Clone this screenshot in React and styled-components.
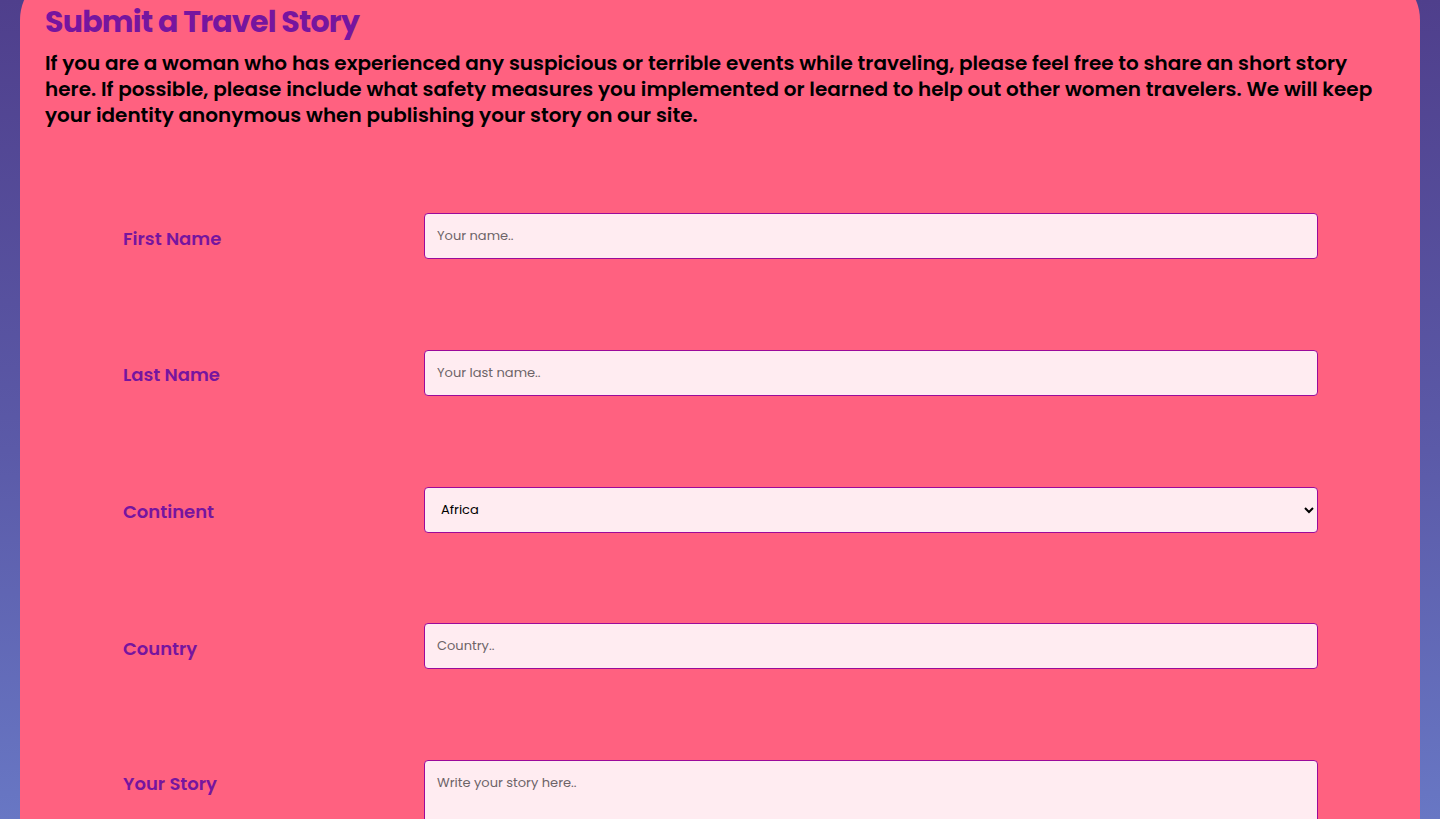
import styled, {createGlobalStyle} from 'styled-components'

const GlobalStyle = createGlobalStyle`
    html, body {
        margin: 0;
        padding: 0;
    }
    body {
        min-height: 100vh;
        background: linear-gradient(180deg, #4f3f8c 0%, #5b5aa8 55%, #6877c4 100%);
        font-family: Poppins, "Open Sans", "Noto Sans", sans-serif;
        overflow: hidden;
    }
`

const Page = styled.div`
    padding: 0 20px;
    height: 819px;
    overflow: hidden;
`

const Card = styled.section`
    margin-top: -30px;
    padding: 30px 25px 60px;
    background: #ff6180;
    border-radius: 50px 50px 0 0;
    min-height: 1200px;
`

const Title = styled.h1`
    margin: 0;
    font-size: 30px;
    line-height: 44px;
    font-weight: 700;
    letter-spacing: -0.75px;
    color: #76159f;
`

const Intro = styled.p`
    margin: 6px 0 0;
    font-size: 20px;
    line-height: 26px;
    font-weight: 600;
    color: #000;
`

const Form = styled.form`
    margin-top: 85px;
    padding-left: 78px;
    display: grid;
    grid-template-columns: 301px 894px;
    row-gap: 90.75px;
    align-items: center;
`

const Label = styled.label`
    font-size: 18px;
    line-height: 27px;
    font-weight: 600;
    color: #76159f;
    padding-top: ${props => props.top ? '10px' : '4px'};
    align-self: ${props => props.top ? 'start' : 'center'};
`

const fieldStyle = `
    box-sizing: border-box;
    width: 100%;
    border: 1px solid #9c0a9a;
    border-radius: 4px;
    background: #ffecf1;
    font-family: Poppins, "Open Sans", "Noto Sans", sans-serif;
    font-size: 13px;
    color: #000;
    outline: none;
    &::placeholder {
        color: #6d6468;
    }
`

const Input = styled.input`
    ${fieldStyle}
    height: 46px;
    padding: 0 12px;
`

const Select = styled.select`
    ${fieldStyle}
    height: 46px;
    padding: 0 12px;
`

const TextArea = styled.textarea`
    ${fieldStyle}
    height: 200px;
    padding: 12px;
    resize: vertical;
`

export default function App() {
    return (
        <Page>
            <GlobalStyle />
            <Card>
                <Title>Submit a Travel Story</Title>
                <Intro>
                    If you are a woman who has experienced any suspicious or terrible events while traveling, please feel free to share an short story here. If possible, please include what safety measures you implemented or learned to help out other women travelers. We will keep your identity anonymous when publishing your story on our site.
                </Intro>
                <Form onSubmit={e => e.preventDefault()}>
                    <Label htmlFor='fname'>First Name</Label>
                    <Input id='fname' placeholder='Your name..' />

                    <Label htmlFor='lname'>Last Name</Label>
                    <Input id='lname' placeholder='Your last name..' />

                    <Label htmlFor='continent'>Continent</Label>
                    <Select id='continent' defaultValue='africa'>
                        <option value='africa'>Africa</option>
                        <option value='asia'>Asia</option>
                        <option value='europe'>Europe</option>
                        <option value='namerica'>North America</option>
                        <option value='samerica'>South America</option>
                        <option value='oceania'>Oceania</option>
                    </Select>

                    <Label htmlFor='country'>Country</Label>
                    <Input id='country' placeholder='Country..' />

                    <Label htmlFor='story' top='1'>Your Story</Label>
                    <TextArea id='story' placeholder='Write your story here..' />
                </Form>
            </Card>
        </Page>
    )
}
